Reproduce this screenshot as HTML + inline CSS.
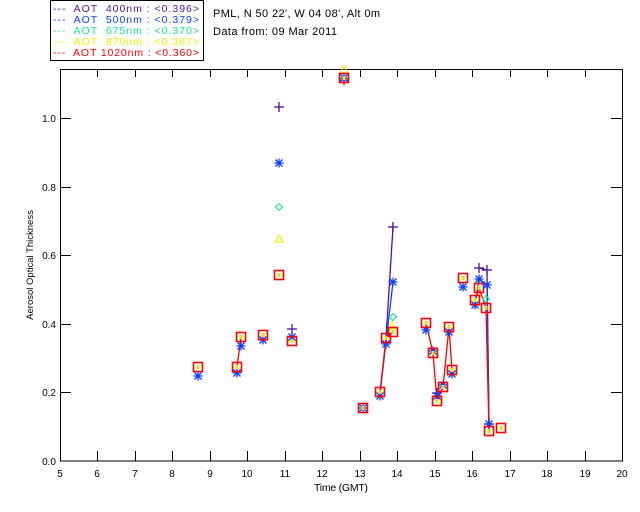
<!DOCTYPE html>
<html><head><style>
html,body{margin:0;padding:0;background:#fff;width:640px;height:512px;overflow:hidden}
svg{display:block}
text{font-family:"Liberation Sans",sans-serif;white-space:pre}
</style></head><body>
<svg width="640" height="512" viewBox="0 0 640 512" xmlns="http://www.w3.org/2000/svg" xml:space="preserve">
<defs>
<g id="sq"><rect x="-4.5" y="-4.5" width="9" height="9" fill="none" stroke="#f00" stroke-width="1.6"/><rect x="-1.5" y="-2" width="3" height="4" fill="#e8e000"/></g>
<g id="as" stroke="#1040ff" stroke-width="1.3"><line x1="-4.5" y1="0" x2="4.5" y2="0"/><line x1="0" y1="-4.5" x2="0" y2="4.5"/><line x1="-3.5" y1="-3.5" x2="3.5" y2="3.5"/><line x1="-3.5" y1="3.5" x2="3.5" y2="-3.5"/></g>
<g id="pl" stroke="#5010a0" stroke-width="1.3"><line x1="-5" y1="0" x2="5" y2="0"/><line x1="0" y1="-5" x2="0" y2="5"/></g>
<g id="dm"><path d="M0,-3.5 L3.5,0 L0,3.5 L-3.5,0Z" fill="none" stroke="#20e090" stroke-width="1.1"/></g>
<g id="tr"><path d="M0,-4 L4,3 L-4,3Z" fill="none" stroke="#f0f000" stroke-width="1.2"/></g>
</defs>

<rect x="50.5" y="0.5" width="153" height="60" fill="#fff" stroke="#000"/>
<g font-size="10.5">
<text x="53" y="12" fill="#5a10a8" textLength="146" lengthAdjust="spacing">---  AOT  400nm : &lt;0.396&gt;</text>
<text x="53" y="23" fill="#1040ff" textLength="146" lengthAdjust="spacing">---  AOT  500nm : &lt;0.379&gt;</text>
<text x="53" y="34" fill="#20e090" textLength="146" lengthAdjust="spacing">---  AOT  675nm : &lt;0.370&gt;</text>
<text x="53" y="45" fill="#f0f000" textLength="146" lengthAdjust="spacing">---  AOT  870nm : &lt;0.367&gt;</text>
<text x="53" y="56" fill="#f00" textLength="146" lengthAdjust="spacing">---  AOT 1020nm : &lt;0.360&gt;</text>
</g>
<text x="213" y="17" font-size="11" textLength="167" lengthAdjust="spacing">PML, N 50 22', W 04 08', Alt 0m</text>
<text x="213" y="35" font-size="11" textLength="124" lengthAdjust="spacing">Data from: 09 Mar 2011</text>

<g stroke="#000" stroke-width="1" fill="none">
<rect x="60.5" y="69.5" width="562" height="391.5"/>
<path d="M97.5,461v-10M135.5,461v-10M172.5,461v-10M210.5,461v-10M247.5,461v-10M285.5,461v-10M322.5,461v-10M360.5,461v-10M397.5,461v-10M435.5,461v-10M472.5,461v-10M510.5,461v-10M547.5,461v-10M585.5,461v-10"/>
<path d="M97.5,69v8M135.5,69v8M172.5,69v8M210.5,69v8M247.5,69v8M285.5,69v8M322.5,69v8M360.5,69v8M397.5,69v8M435.5,69v8M472.5,69v8M510.5,69v8M547.5,69v8M585.5,69v8"/>
<path d="M60,392.5h11M60,324.5h11M60,255.5h11M60,187.5h11M60,118.5h11"/>
<path d="M622,392.5h-11M622,324.5h-11M622,255.5h-11M622,187.5h-11M622,118.5h-11"/>
</g>
<g font-size="10" text-anchor="middle">
<text x="60" y="477">5</text><text x="97" y="477">6</text><text x="135" y="477">7</text><text x="172" y="477">8</text><text x="210" y="477">9</text><text x="247" y="477">10</text><text x="285" y="477">11</text><text x="322" y="477">12</text><text x="360" y="477">13</text><text x="397" y="477">14</text><text x="435" y="477">15</text><text x="472" y="477">16</text><text x="510" y="477">17</text><text x="547" y="477">18</text><text x="585" y="477">19</text><text x="622" y="477">20</text>
</g>
<g font-size="10" text-anchor="end">
<text x="56" y="465">0.0</text><text x="56" y="396">0.2</text><text x="56" y="328">0.4</text><text x="56" y="259">0.6</text><text x="56" y="191">0.8</text><text x="56" y="122">1.0</text>
</g>
<text x="314" y="491" font-size="10.5" textLength="54" lengthAdjust="spacing">Time (GMT)</text>
<text transform="translate(33,265) rotate(-90)" font-size="9.5" text-anchor="middle">Aerosol Optical Thickness</text>

<g fill="none" stroke-width="1.3">
<polyline stroke="#5010a0" points="393,227 386,338"/>
<polyline stroke="#1040ff" points="393,282 386,342 380,394"/>
<polyline stroke="#5010a0" points="479,268 487,270 489,424"/>
<polyline stroke="#1040ff" points="475,305 479,279 487,285 489,424"/>
<polyline stroke="#f00" points="237,367 241,337"/>
<polyline stroke="#f00" points="380,392 386,338 393,332"/>
<polyline stroke="#f00" points="426,323 433,353 437,401 443,387 449,327 452,370"/>
<polyline stroke="#f00" points="475,300 479,288 486,308 489,431"/>
</g>

<g>
<use href="#pl" x="279" y="107"/><use href="#as" x="279" y="163"/><use href="#dm" x="279" y="207"/><use href="#tr" x="279" y="239"/><use href="#sq" x="279" y="275"/>
<use href="#tr" x="344" y="70"/><use href="#pl" x="344" y="80"/><use href="#as" x="344" y="78"/><use href="#sq" x="344" y="78"/>
<use href="#as" x="198" y="376"/><use href="#sq" x="198" y="367"/>
<use href="#as" x="237" y="373"/><use href="#sq" x="237" y="367"/>
<use href="#as" x="241" y="346"/><use href="#sq" x="241" y="337"/>
<use href="#as" x="263" y="340"/><use href="#sq" x="263" y="335"/>
<use href="#pl" x="292" y="329"/><use href="#as" x="292" y="337"/><use href="#sq" x="292" y="341"/>
<use href="#as" x="363" y="408"/><use href="#sq" x="363" y="408"/>
<use href="#as" x="380" y="396"/><use href="#sq" x="380" y="392"/>
<use href="#as" x="386" y="344"/><use href="#sq" x="386" y="338"/>
<use href="#pl" x="393" y="227"/><use href="#as" x="393" y="282"/><use href="#dm" x="393" y="317"/><use href="#tr" x="392" y="326"/><use href="#sq" x="393" y="332"/>
<use href="#as" x="426" y="330"/><use href="#sq" x="426" y="323"/>
<use href="#as" x="433" y="351"/><use href="#sq" x="433" y="353"/>
<use href="#pl" x="437" y="393"/><use href="#as" x="437" y="396"/><use href="#sq" x="437" y="401"/>
<use href="#as" x="443" y="385"/><use href="#sq" x="443" y="387"/>
<use href="#as" x="449" y="332"/><use href="#sq" x="449" y="327"/>
<use href="#as" x="452" y="374"/><use href="#sq" x="452" y="370"/>
<use href="#as" x="463" y="287"/><use href="#sq" x="463" y="278"/>
<use href="#as" x="475" y="305"/><use href="#sq" x="475" y="300"/>
<use href="#pl" x="479" y="268"/><use href="#as" x="479" y="279"/><use href="#sq" x="479" y="288"/>
<use href="#pl" x="487" y="270"/><use href="#as" x="487" y="285"/><use href="#dm" x="486" y="299"/><use href="#sq" x="486" y="308"/>
<use href="#pl" x="489" y="424"/><use href="#as" x="489" y="424"/><use href="#sq" x="489" y="431"/>
<use href="#sq" x="501" y="428"/>
</g>
</svg>
</body></html>
